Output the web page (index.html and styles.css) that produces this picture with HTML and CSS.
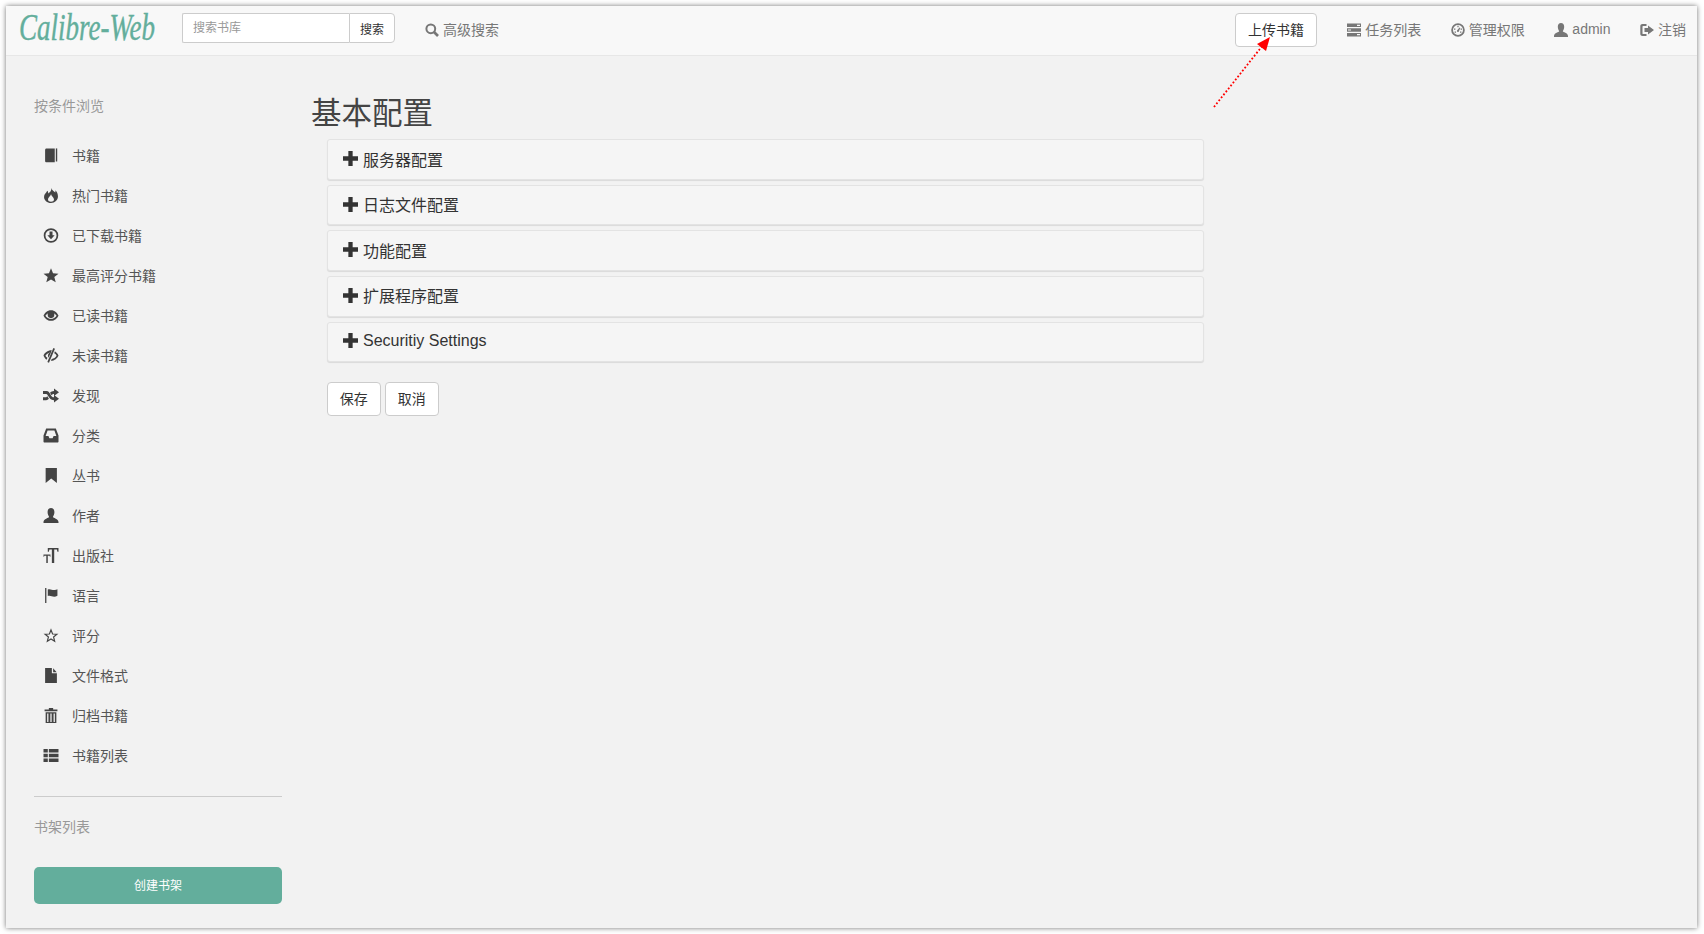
FILE: index.html
```html
<!DOCTYPE html>
<html lang="zh">
<head>
<meta charset="utf-8">
<title>Calibre-Web</title>
<link rel="stylesheet" href="styles.css">
</head>
<body>
<div class="window">
  <header class="navbar">
    <div class="logo-box"><a class="logo">Calibre-Web</a></div>
    <form class="search">
      <input class="search-input" placeholder="搜索书库">
      <button class="search-btn" type="button">搜索</button>
    </form>
    <a class="nav-link adv"><svg class="ic" viewBox="0 0 14 14"><circle cx="5.8" cy="5.8" r="4.4" fill="none" stroke="currentColor" stroke-width="2"/><path d="M9 9l4 4" stroke="currentColor" stroke-width="2.6" fill="none"/></svg>高级搜索</a>
    <button class="upload" type="button">上传书籍</button>
    <a class="nav-link"><svg class="ic" viewBox="0 0 14 14"><path d="M0 .5h14v3.600H0zM0 5.200h14v3.600H0zM0 9.900h14v3.600H0z"/><path d="M10 1.700h3v1.200h-3zM1 6.400h3v1.200H1zM10 11.100h3v1.200h-3z" fill="#f8f8f8"/></svg>任务列表</a>
    <a class="nav-link"><svg class="ic" viewBox="0 0 14 14"><path fill-rule="evenodd" d="M7 .2a6.800 6.800 0 1 0 0 13.600A6.800 6.800 0 0 0 7 .2zm0 1.800a5 5 0 1 1 0 10 5 5 0 0 1 0-10z"/><path d="M6.400 2.800h1.200v1.400H6.400zM3 5.500h1.400v1.200H3zM9.600 5.500H11v1.200H9.600zM3.600 8.500h1.400v1.200H3.600zM9 8.500h1.400v1.200H9zM6 7.500l2.500-3 .8.500L7.700 8.800a1.100 1.100 0 0 1-1.700-1.300z"/></svg>管理权限</a>
    <a class="nav-link"><svg class="ic" viewBox="0 0 14 14"><path d="M7 0c2 0 3.200 1.500 3.200 3.800C10.200 6 9.200 7.500 8.800 8.300c0 .8 5.200 1.700 5.200 4.700v1H0v-1c0-3 5.200-3.900 5.200-4.700C4.800 7.500 3.800 6 3.800 3.800 3.800 1.500 5 0 7 0z"/></svg>admin</a>
    <a class="nav-link"><svg class="ic" viewBox="0 0 14 14"><path d="M6.500 1H2.500C1.200 1 .3 1.800.3 3v8c0 1.200.9 2 2.200 2h4v-2H3.200c-.5 0-.7-.2-.7-.6V3.600c0-.4.2-.6.7-.6h3.300z"/><path d="M8 2.500L14 7l-6 4.500V9H4.500V5H8z"/></svg>注销</a>
  </header>
  <div class="main">
    <aside class="sidebar">
      <h6 class="side-head">按条件浏览</h6>
      <ul class="side-list">
        <li class="side-item"><svg class="ic" viewBox="0 0 14 14"><path d="M1.500 1.800C1.500 1 2 .4 2.800.4H10.500v13H2.800c-.8 0-1.300-.4-1.300-1.200z"/><path d="M11.500.4h1.300v12.200h-1.300z"/></svg>书籍</li>
        <li class="side-item"><svg class="ic" viewBox="0 0 14 14"><path fill-rule="evenodd" d="M7.500 0c.2 2 2 2.700 3.500 4.200.2-.7.200-1.400 0-2 1.700 1.500 2.500 3.500 2.500 5.800 0 3.300-2.800 6-6.500 6S.5 11.300.5 8.300C.5 5.500 2.300 5 3.500 2.500c.7.700 1 1.700.9 2.700C5.900 4.200 7.500 2.500 7.500 0zM7 5.500c.2 1.500-2.800 3-2.800 5.200C4.200 12 5.500 12.800 7 12.800s2.800-.8 2.800-2.100C9.800 8.500 7.200 7.500 7 5.500z"/></svg>热门书籍</li>
        <li class="side-item"><svg class="ic" viewBox="0 0 14 14"><path fill-rule="evenodd" d="M7 .2a6.800 6.800 0 1 0 0 13.600A6.800 6.800 0 0 0 7 .2zm0 1.600a5.200 5.200 0 1 1 0 10.400A5.200 5.200 0 0 1 7 1.800z"/><path d="M5.600 3.300h2.800v3.500h2L7 10.500 3.600 6.800h2z"/></svg>已下载书籍</li>
        <li class="side-item"><svg class="ic" viewBox="0 0 14 14"><path d="M7 .3l1.900 4.700 5.100.3-3.900 3.200 1.300 4.900L7 10.800l-4.400 2.600 1.300-4.900L0 5.300 5.100 5z"/></svg>最高评分书籍</li>
        <li class="side-item"><svg class="ic" viewBox="0 0 14 14"><path fill-rule="evenodd" d="M7 2C3.500 2 1 4.600 0 7c1 2.400 3.500 5 7 5s6-2.600 7-5c-1-2.400-3.500-5-7-5zM7 4.200C5 4.200 2.800 5.500 1.800 7.200c1 1.600 3.200 3.100 5.200 3.100s4.200-1.500 5.200-3.100C11.200 5.500 9 4.200 7 4.200z"/><circle cx="7" cy="6.400" r="3.100"/></svg>已读书籍</li>
        <li class="side-item"><svg class="ic" viewBox="0 0 14 14"><path d="M9.200 0l1.500.8-5.600 13-1.500-.8z"/><path d="M7.800 2.100L6.900 4.300C4.900 4.500 2.800 5.700 1.800 7.200c.5.900 1.100 1.500 1.900 2L2.900 11C1.500 10 .6 8.500 0 7c1-2.400 3.800-5 7.800-4.900zM10.600 3C12.200 4 13.400 5.500 14 7c-1 2.400-3.500 5-7.200 5l.9-1.800c1.900-.2 3.500-1.500 4.500-3-.4-.8-1-1.600-2.200-2.200z"/><path d="M7.300 3.800L4.600 9C3.400 6.800 4.800 4.100 7.300 3.800z"/></svg>未读书籍</li>
        <li class="side-item"><svg class="ic" viewBox="0 0 16 14"><path d="M0 2.500h3.500c2 0 3 1.700 4 3.400.9 1.600 1.500 2.900 3.500 2.900V6.500l5 3.700-5 3.800v-2.300C7.800 11.700 6.500 9.800 5.500 8.100 4.700 6.700 4.200 5.400 3.200 5.400H0z"/><path d="M0 8.800h3.200l1.200-1 1.500 2.500c-.8.900-1.700 1.400-2.700 1.400H0zM11 0l5 3.800-5 3.700V5.400c-1.200 0-1.800.5-2.400 1.400L7 4.300c1-1 2.300-1.800 4-1.800z"/></svg>发现</li>
        <li class="side-item"><svg class="ic" viewBox="0 0 14 14"><path fill-rule="evenodd" d="M2.500.5h9L14 7v5.500c0 .6-.4 1-1 1H1c-.6 0-1-.4-1-1V7zM3.800 2.300L2 7.500h2.600l.9 2h3l.9-2H12l-1.800-5.200z"/></svg>分类</li>
        <li class="side-item"><svg class="ic" viewBox="0 0 14 14"><path d="M2 0h10.500v14L7.200 9.800 2 14z"/></svg>丛书</li>
        <li class="side-item"><svg class="ic" viewBox="0 0 14 14"><path d="M7 0c2 0 3.200 1.500 3.200 3.800C10.200 6 9.200 7.500 8.800 8.300c0 .8 5.200 1.700 5.200 4.700v1H0v-1c0-3 5.200-3.900 5.200-4.700C4.800 7.500 3.800 6 3.800 3.800 3.800 1.500 5 0 7 0z"/></svg>作者</li>
        <li class="side-item"><svg class="ic" viewBox="0 0 14 14"><path d="M4 0h10v3.500h-1l-.5-2H10V14H7.800V1.500H5.500L5 3.500H4zM0 6h6.500v2.200H6l-.3-1H4V14H2.600V7.200H.8L.5 8.200H0z"/></svg>出版社</li>
        <li class="side-item"><svg class="ic" viewBox="0 0 14 14"><path d="M1.500 0h1.200v14H1.500zM4 1.500c2.500-1 4 .8 6.500.4.800-.1 1.700-.4 2.500-.7v6c-1 .6-2 1-3 1-2.300 0-3.600-1.500-6-.7z"/></svg>语言</li>
        <li class="side-item"><svg class="ic" viewBox="0 0 14 14"><path fill="none" stroke="currentColor" stroke-width="1.100" d="M7 1.800l1.500 3.800 4 .2-3.100 2.600 1 3.900L7 10.200l-3.400 2.100 1-3.900-3.100-2.600 4-.2z"/></svg>评分</li>
        <li class="side-item"><svg class="ic" viewBox="0 0 14 14"><path d="M1.500 0h6.300v5h4.700v9h-11zM9 .3l3.300 3.700H9z"/></svg>文件格式</li>
        <li class="side-item"><svg class="ic" viewBox="0 0 14 14"><path fill-rule="evenodd" d="M5 0h4v1.500h4v1.600H1V1.500h4zM2 4h10v10H2zM3.400 5.200V13h1.200V5.200zM6.400 5.200V13h1.200V5.200zM9.400 5.200V13h1.200V5.200z"/></svg>归档书籍</li>
        <li class="side-item"><svg class="ic" viewBox="0 0 14 14"><path d="M0 1h4v3.300H0zM5 1h9v3.300H5zM0 5.400h4v3.300H0zM5 5.400h9v3.300H5zM0 9.800h4v3.300H0zM5 9.800h9v3.300H5z"/></svg>书籍列表</li>
      </ul>
      <hr class="side-rule">
      <h6 class="side-head">书架列表</h6>
      <button class="create" type="button">创建书架</button>
    </aside>
    <main class="content">
      <h2 class="title">基本配置</h2>
      <div class="form">
        <div class="panel"><svg class="plus" viewBox="0 0 14 14"><path d="M5 0h4v5h5v4H9v5H5V9H0V5h5z"/></svg>服务器配置</div>
        <div class="panel"><svg class="plus" viewBox="0 0 14 14"><path d="M5 0h4v5h5v4H9v5H5V9H0V5h5z"/></svg>日志文件配置</div>
        <div class="panel"><svg class="plus" viewBox="0 0 14 14"><path d="M5 0h4v5h5v4H9v5H5V9H0V5h5z"/></svg>功能配置</div>
        <div class="panel"><svg class="plus" viewBox="0 0 14 14"><path d="M5 0h4v5h5v4H9v5H5V9H0V5h5z"/></svg>扩展程序配置</div>
        <div class="panel"><svg class="plus" viewBox="0 0 14 14"><path d="M5 0h4v5h5v4H9v5H5V9H0V5h5z"/></svg>Securitiy Settings</div>
        <div class="actions">
          <button class="btn" type="button">保存</button>
          <button class="btn" type="button">取消</button>
        </div>
      </div>
    </main>
  </div>
</div>
<svg class="arrow" viewBox="0 0 70 80" width="70" height="80"><path d="M3 78L52 16" stroke="#f00" stroke-width="1.800" stroke-dasharray="1.800 2" fill="none"/><path d="M59 8L55 22 46 15z" fill="#f00"/></svg>
</body>
</html>
```
FILE: styles.css
```css
* { box-sizing: border-box; }
html, body { margin: 0; padding: 0; background: #fff; }
body {
  position: relative;
  height: 934px;
  overflow: hidden;
  font-family: "Liberation Sans", "Noto Sans CJK SC", sans-serif;
  font-size: 14px;
  color: #333;
}
.window {
  margin: 6px 7px 6px 6px;
  height: 922px;
  background: #f2f2f2;
  box-shadow: 0 0 5px rgba(0, 0, 0, .55);
  display: flex;
  flex-direction: column;
}
.navbar {
  height: 50px;
  flex: none;
  background: #f8f8f8;
  border-bottom: 1px solid #e7e7e7;
  display: flex;
  align-items: flex-start;
  padding-left: 13px;
}
.logo-box { width: 163px; flex: none; margin-top: 3px; }
.logo {
  display: inline-block;
  white-space: nowrap;
  font-family: "Liberation Serif", serif;
  font-style: italic;
  font-size: 37px;
  line-height: 38px;
  color: #63ae9c;
  -webkit-text-stroke: .4px #63ae9c;
  transform: scaleX(.73);
  transform-origin: left center;
}
.search { display: flex; height: 30px; margin-top: 7px; width: 213px; flex: none; }
.search-input {
  width: 167px;
  height: 30px;
  border: 1px solid #ccc;
  border-right: 0;
  border-radius: 2px 0 0 2px;
  padding: 0 10px;
  background: #fff;
  font: 12px "Liberation Sans", "Noto Sans CJK SC", sans-serif;
}
.search-input::placeholder { color: #999; }
.search-btn {
  flex: 1;
  height: 30px;
  padding: 0;
  border: 1px solid #ccc;
  border-radius: 0 4px 4px 0;
  background: #fff;
  color: #333;
  font: 12px "Liberation Sans", "Noto Sans CJK SC", sans-serif;
}
.nav-link {
  display: flex;
  align-items: center;
  height: 20px;
  margin: 13px 0 0 29.500px;
  color: #777;
  white-space: nowrap;
}
.nav-link .ic { margin-right: 4px; width: 14px; height: 14px; margin-top: 1px; }
.adv { margin-left: 30px; margin-right: auto; }
.upload {
  width: 82.500px;
  height: 34px;
  margin-top: 7px;
  padding: 0 0 2px;
  border: 1px solid #ccc;
  border-radius: 4px;
  background: #fff;
  color: #333;
  font: 14px "Liberation Sans", "Noto Sans CJK SC", sans-serif;
}
.upload + .nav-link { margin-left: 30px; }
.nav-link:last-child { margin-right: 11px; }
.ic { fill: currentColor; flex: none; }
.main { flex: 1; display: flex; min-height: 0; }
.sidebar {
  width: 248px;
  flex: none;
  margin-left: 28px;
  padding-top: 40px;
}
.side-head {
  margin: 0;
  font-size: 14px;
  font-weight: 400;
  line-height: 20px;
  color: #999;
}
.side-list { list-style: none; margin: 19px 0 0; padding: 0; }
.side-item {
  display: flex;
  align-items: center;
  height: 40px;
  padding-left: 9px;
  color: #555;
}
.side-item .ic { width: 16px; height: 15px; margin-right: 13px; color: #444; }
.side-rule { margin: 21px 0 20px; border: 0; border-top: 1px solid #ccc; }
.create {
  display: block;
  width: 100%;
  height: 37px;
  margin-top: 30px;
  padding: 0 0 2px;
  border: 0;
  border-radius: 5px;
  background: #63ae9c;
  color: #fff;
  font: 12px "Liberation Sans", "Noto Sans CJK SC", sans-serif;
}
.content { margin-left: 30px; padding-top: 40px; width: 892px; flex: none; }
.title {
  margin: 0 0 9.300px -1px;
  font-size: 30.500px;
  line-height: 34px;
  font-weight: 400;
  color: #444;
}
.form { margin-left: 15px; }
.panel {
  display: flex;
  align-items: center;
  height: 40.600px;
  margin-bottom: 5px;
  padding: 0 0 2px 15px;
  background: #f5f5f5;
  border: 1px solid #e3e3e3;
  border-radius: 3px;
  box-shadow: 0 1px 1px rgba(0, 0, 0, .1);
  font-size: 16px;
  color: #333;
}
.plus { width: 15px; height: 15px; margin-right: 5px; fill: #333; flex: none; }
.actions { display: flex; gap: 4.500px; margin-top: 20px; }
.btn {
  width: 53.500px;
  height: 33.500px;
  padding: 0 0 2px;
  border: 1px solid #ccc;
  border-radius: 4px;
  background: #fff;
  color: #333;
  font: 14px "Liberation Sans", "Noto Sans CJK SC", sans-serif;
}
.arrow { position: absolute; left: 1211px; top: 29px; }
```
